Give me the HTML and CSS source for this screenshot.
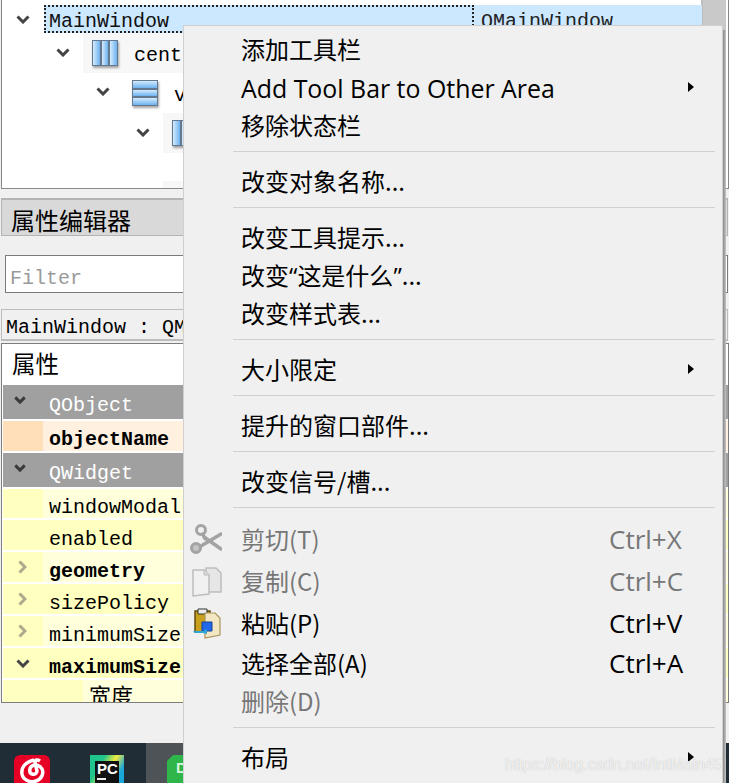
FILE: index.html
```html
<!DOCTYPE html>
<html lang="zh">
<head>
<meta charset="utf-8">
<title>Qt Designer</title>
<link rel="stylesheet" href="styles.css">
</head>
<body>
<div class="page">
  <section class="tree">
    <div class="tree-body">
      <div class="t-row t-first">
        <svg class="chev c-tree" viewBox="0 0 14 9"><path d="M1.500 1.500 7 7l5.500-5.500"/></svg>
        <div class="t-sel"><span class="t-name">MainWindow</span><span class="t-class">QMainWindow</span></div>
      </div>
      <div class="t-row t-alt t-l1">
        <svg class="chev c-tree" viewBox="0 0 14 9"><path d="M1.500 1.500 7 7l5.500-5.500"/></svg>
        <div class="t-cell"><span class="lay lay-h"><i></i><i></i><i></i></span><span class="t-label">centralwidget</span></div>
      </div>
      <div class="t-row t-l2">
        <svg class="chev c-tree" viewBox="0 0 14 9"><path d="M1.500 1.500 7 7l5.500-5.500"/></svg>
        <div class="t-cell"><span class="lay lay-v"><i></i><i></i><i></i></span><span class="t-label">verticalLayout</span></div>
      </div>
      <div class="t-row t-alt t-l3">
        <svg class="chev c-tree" viewBox="0 0 14 9"><path d="M1.500 1.500 7 7l5.500-5.500"/></svg>
        <div class="t-cell"><span class="lay lay-h"><i></i><i></i><i></i></span><span class="t-label">horizontalLayout</span></div>
      </div>
      <div class="t-row t-gap"></div>
      <div class="t-row t-alt t-stub"></div>
    </div>
    <div class="t-scroll"></div>
  </section>

  <header class="dock-title">属性编辑器</header>
  <div class="filter-wrap"><div class="filter">Filter</div></div>
  <div class="obj-label">MainWindow : QMainWindow</div>

  <section class="props">
    <div class="p-head">属性</div>
    <div class="p-group"><svg class="chev c-group" viewBox="0 0 14 9"><path d="M1.500 1.500 7 7l5.500-5.500"/></svg><span>QObject</span></div>
    <div class="p-row peach bold"><span class="gut"></span><span class="pn">objectName</span></div>
    <div class="p-group"><svg class="chev c-group" viewBox="0 0 14 9"><path d="M1.500 1.500 7 7l5.500-5.500"/></svg><span>QWidget</span></div>
    <div class="p-row light h31"><span class="gut"></span><span class="pn">windowModal</span></div>
    <div class="p-row plain"><span class="gut"></span><span class="pn">enabled</span></div>
    <div class="p-row light bold"><span class="gut"><svg class="more" viewBox="0 0 9 14"><path d="M1.500 1.500 7 7l-5.500 5.500"/></svg></span><span class="pn">geometry</span></div>
    <div class="p-row plain"><span class="gut"><svg class="more" viewBox="0 0 9 14"><path d="M1.500 1.500 7 7l-5.500 5.500"/></svg></span><span class="pn">sizePolicy</span></div>
    <div class="p-row light"><span class="gut"><svg class="more" viewBox="0 0 9 14"><path d="M1.500 1.500 7 7l-5.500 5.500"/></svg></span><span class="pn">minimumSize</span></div>
    <div class="p-row plain bold"><span class="gut"><svg class="chev c-prop" viewBox="0 0 14 9"><path d="M1.500 1.500 7 7l5.500-5.500"/></svg></span><span class="pn">maximumSize</span></div>
    <div class="p-row light sub"><span class="gut"></span><span class="pn cjk">宽度</span></div>
  </section>

  <footer class="taskbar">
    <div class="tb-dark">
      <span class="tb-music">
        <svg viewBox="0 0 36 28"><path d="M20 5C12 7 7 12 8 19c1 6 8 9 14 7 6-2 8-8 6-12-2-4-7-5-10-3-3 2-3 7 0 8 3 1 5-1 5-3l-2-9c0-2 2-3 5-1"/></svg>
      </span>
      <span class="tb-pc"><span class="pc-core"><b>PC</b><i></i></span></span>
    </div>
    <div class="tb-hover"><span class="tb-d">D</span></div>
    <div class="tb-fill"></div>
  </footer>

  <nav class="menu">
    <div class="mi"><span class="slot"></span><span class="ml">添加工具栏</span></div>
    <div class="mi"><span class="slot"></span><span class="ml en">Add Tool Bar to Other Area</span><span class="sub-arrow"></span></div>
    <div class="mi"><span class="slot"></span><span class="ml">移除状态栏</span></div>
    <div class="sep"></div>
    <div class="mi"><span class="slot"></span><span class="ml">改变对象名称...</span></div>
    <div class="sep"></div>
    <div class="mi"><span class="slot"></span><span class="ml">改变工具提示...</span></div>
    <div class="mi"><span class="slot"></span><span class="ml">改变<span class="q">“</span>这是什么<span class="q">”</span>...</span></div>
    <div class="mi"><span class="slot"></span><span class="ml">改变样式表...</span></div>
    <div class="sep"></div>
    <div class="mi"><span class="slot"></span><span class="ml">大小限定</span><span class="sub-arrow"></span></div>
    <div class="sep"></div>
    <div class="mi"><span class="slot"></span><span class="ml">提升的窗口部件...</span></div>
    <div class="sep"></div>
    <div class="mi"><span class="slot"></span><span class="ml">改变信号/槽...</span></div>
    <div class="sep"></div>
    <div class="mi tall off"><span class="slot">
      <svg class="ic" viewBox="0 0 32 32">
        <g fill="none" stroke="#a3a3a3" stroke-linecap="round">
          <path d="M14 13 31 25" stroke-width="3.500"/>
          <path d="M11 22 31 10" stroke-width="3.500"/>
          <circle cx="11" cy="6" r="4.500" stroke-width="3"/>
          <circle cx="6" cy="24" r="4.500" stroke-width="3" fill="#c4c4c4"/>
          <path d="M13 10l2 5" stroke-width="3"/>
        </g>
      </svg></span><span class="ml">剪切(T)</span><span class="sc">Ctrl+X</span></div>
    <div class="mi tall off"><span class="slot">
      <svg class="ic" viewBox="0 0 32 32">
        <path d="M16 2h10l5 5v19H16z" fill="#e6e6e6" stroke="#bdbdbd" stroke-width="1.500"/>
        <path d="M3 4h11l5 5v19l-16 2z" fill="#f1f1f1" stroke="#bdbdbd" stroke-width="1.500"/>
        <path d="M14 4v5h5" fill="#d8d8d8" stroke="#bdbdbd"/>
      </svg></span><span class="ml">复制(C)</span><span class="sc">Ctrl+C</span></div>
    <div class="mi tall"><span class="slot">
      <svg class="ic" viewBox="0 0 32 32">
        <path d="M5 3h15v21H5z" fill="#c9a01c" stroke="#5f4a0e" stroke-width="1.500"/>
        <path d="M8 1h9v5H8z" fill="#ececec" stroke="#333"/>
        <path d="M15 5h10l5 5v17l-15 3z" fill="#f3e6c2" stroke="#a8945c" stroke-width="1.200"/>
        <path d="M12 14h10v9H12z" fill="#2368e8" stroke="#12409a"/>
        <path d="M3 23h10l4-2v5l-4-1H5z" fill="#2fa6d8"/>
      </svg></span><span class="ml">粘贴(P)</span><span class="sc">Ctrl+V</span></div>
    <div class="mi"><span class="slot"></span><span class="ml">选择全部(A)</span><span class="sc">Ctrl+A</span></div>
    <div class="mi off"><span class="slot"></span><span class="ml">删除(D)</span></div>
    <div class="sep"></div>
    <div class="mi"><span class="slot"></span><span class="ml">布局</span><span class="sub-arrow"></span></div>
  </nav>
  <div class="menu-shadow"></div>
  <div class="wm">https://blog.csdn.net/IntMain45</div>
</div>
</body>
</html>
```

FILE: styles.css
```css
* { box-sizing: border-box; }
html, body { margin: 0; padding: 0; }
body { background: #f0f0f0; }
.page {
  position: relative; width: 729px; height: 783px; overflow: hidden;
  background: #f0f0f0; display: flex; flex-direction: column; color: #000;
  font-family: "Noto Sans CJK SC", "Noto Sans", sans-serif;
}

/* object tree */
.tree {
  height: 189px; margin-left: 1px; width: 728px; flex: none; display: flex;
  background: #fff; border: 1px solid #888; border-top: 0; overflow: hidden;
}
.tree-body { width: 701px; flex: none; padding-top: 5px; border-right: 2px solid #bdbdbd; }
.t-row { position: relative; height: 40px; display: flex; align-items: center; }
.t-first { height: 28px; }
.t-gap { height: 28px; }
.t-stub { height: 8px; margin-left: 161px; background: #f7f7f7; }
.t-sel { position: absolute; left: 42px; right: -1px; top: 0; height: 28px; background: #cce8ff; display: flex; }
.t-name {
  width: 430px; height: 28px; padding: 0 0 0 3px; border: 2px dotted #222;
  font: 20px/30px "Liberation Mono", monospace; color: #111; overflow: hidden;
}
.t-class { padding-left: 7px; font: 20px/34px "Liberation Mono", monospace; color: #222; }
.t-cell { position: absolute; top: 0; bottom: 0; right: 0; display: flex; align-items: center; gap: 16px; padding-left: 9px; }
.t-l1 .t-cell { left: 81px; background: #f7f7f7; }
.t-l2 .t-cell { left: 121px; }
.t-l3 .t-cell { left: 161px; background: #f7f7f7; }
.t-label { font: 20px/28px "Liberation Mono", monospace; padding-top: 6px; }
.chev { display: block; fill: none; stroke: #444; stroke-width: 3; }
.c-tree { position: absolute; width: 14px; height: 9px; top: 14px; }
.t-first .c-tree { left: 14px; top: 10px; }
.t-l1 .c-tree { left: 54px; top: 15px; }
.t-l2 .c-tree { left: 94px; }
.t-l3 .c-tree { left: 134px; top: 15px; }

.lay { display: flex; width: 26px; height: 26px; gap: 0; filter: drop-shadow(1px 2px 1px rgba(90,90,90,.55)); }
.lay-h { flex-direction: row; }
.lay-v { flex-direction: column; }
.lay i { flex: 1; display: block; border: 1px solid #63788f; }
.lay-h i { background: linear-gradient(90deg, #d4ebfc, #6eb2f0); }
.lay-v i { background: linear-gradient(180deg, #d4ebfc, #6eb2f0); }
.t-scroll { flex: 1; background: #c9c9c9; margin-right: 2px; }

/* dock title */
.dock-title {
  height: 38px; margin: 9px 1px 0 1px; flex: none; background: #d9d9d9;
  border: 1px solid #b4b4b4; border-top-width: 2px; padding-left: 9px;
  font-size: 24px; line-height: 39px;
}
.filter-wrap { height: 73px; padding: 19px 1px 0 5px; flex: none; }
.filter {
  height: 38px; background: #fff; border: 1px solid #7a7a7a; padding-left: 4px;
  font: 20px/46px "Liberation Mono", monospace; color: #9a9a9a; overflow: hidden;
}
.obj-label {
  height: 32px; margin: 0 1px; flex: none; background: #f0f0f0;
  border: 1px solid #bcbcbc; border-bottom-width: 2px; padding-left: 4px;
  font: 20px/36px "Liberation Mono", monospace; overflow: hidden;
}

/* property table */
.props {
  height: 360px; margin: 2px 0 0 1px; flex: none; border: 1px solid #7d7d7d;
  background: #fff; overflow: hidden; padding-left: 1px;
}
.p-head { height: 41px; padding-left: 9px; font-size: 23.500px; line-height: 38px; }
.p-group {
  height: 34px; margin-bottom: 2px; display: flex; align-items: center; position: relative;
  background: #a0a0a0; color: #fff; padding: 8px 0 0 46px;
  font: 20px/26px "Liberation Mono", monospace;
}
.c-group { position: absolute; left: 11px; top: 11px; width: 12px; height: 8px; stroke: #3a3a3a; stroke-width: 3.500; }
.p-row { display: flex; height: 30px; margin-bottom: 2px; font: 20px/40px "Liberation Mono", monospace; }
.p-row.peach, .p-row.h31 { line-height: 38px; }
.h31 { height: 29px; }
.gut { width: 40px; flex: none; display: flex; align-items: center; padding-left: 13px; position: relative; }
.pn { flex: 1; padding-left: 6px; white-space: nowrap; }
.bold .pn { font-weight: 700; }
.peach { background: #ffdfba; }
.peach .pn { background: #fff0e0; }
.light { background: #ffffbf; }
.light .pn { background: #ffffdc; }
.plain { background: #ffffbf; }
.more { width: 9px; height: 14px; margin-left: 2px; fill: none; stroke: #aaa98c; stroke-width: 3; }
.c-prop { width: 14px; height: 9px; stroke: #444; }
.sub .gut { width: 80px; }
.p-row .cjk { font: 22px/28px "Noto Sans CJK SC", sans-serif; padding-left: 6px; }

/* taskbar */
.taskbar { height: 40px; margin-top: 40px; flex: none; display: flex; background: #1f2d36; }
.tb-dark { width: 146px; position: relative; background: #202d36; }
.tb-hover { width: 38px; background: #4e5358; padding: 12px 0 0 21px; overflow: hidden; flex: none; }
.tb-fill { flex: 1; }
.tb-music { position: absolute; left: 14px; top: 12px; width: 36px; height: 28px; background: #e60026; border-radius: 6px 6px 0 0; }
.tb-music svg { display: block; fill: none; stroke: #fff; stroke-width: 3.500; width: 36px; height: 28px; }
.tb-pc { position: absolute; left: 90px; top: 12px; width: 34px; height: 28px; background: linear-gradient(120deg, #1fc58c 30%, #f2ea3e 55%, #1aa6d8 80%); padding: 6px 0 0 5px; }
.pc-core { display: block; width: 24px; height: 22px; background: #111; color: #fff; position: relative; padding-left: 2px; }
.pc-core b { display: block; font: 700 15px/15px "Liberation Sans", sans-serif; }
.pc-core i { display: block; width: 9px; height: 2px; background: #eee; margin-top: 2px; }
.tb-d {
  display: block; width: 20px; height: 28px; background: #2fb64a; color: #d8f5dc;
  font: 700 15px/26px "Liberation Sans", sans-serif; padding-left: 9px;
  clip-path: polygon(6px 0, 100% 0, 100% 100%, 0 100%, 0 6px);
}

/* context menu */
.menu {
  position: absolute; left: 183px; top: 25px; width: 540px; height: 758px;
  background: #f0f0f0; border: 1px solid #cfcfcf; border-bottom: 0; padding-top: 5px;
}
.mi { height: 38px; display: flex; align-items: center; font-size: 24px; color: #000; position: relative; }
.tall { height: 42px; }
.off { color: #777; }
.slot { width: 51px; margin-left: 6px; flex: none; display: flex; align-items: center; height: 32px; }
.ic { width: 32px; height: 32px; display: block; }
.ml { white-space: nowrap; line-height: 36px; margin-bottom: 2px; }
.en { font-family: "Open Sans", "Noto Sans", sans-serif; font-size: 24.900px; margin-bottom: 0; }
.q { font-family: "Open Sans", "Noto Sans", sans-serif; }
.sc { position: absolute; left: 425px; font-family: "Open Sans", "Noto Sans", sans-serif; font-size: 26px; line-height: 36px; margin-bottom: 2px; }
.sub-arrow {
  position: absolute; left: 504px; top: 13px; width: 0; height: 0;
  border-left: 6px solid #000; border-top: 5px solid transparent; border-bottom: 5px solid transparent;
}
.sep { height: 18px; padding: 6px 7px 11px 49px; }
.sep::before { content: ""; display: block; height: 1px; background: #d0d0d0; }
.menu-shadow { position: absolute; left: 723px; top: 30px; width: 3px; height: 753px; background: linear-gradient(90deg, #8a8a8a, #c4c4c4); }
.wm {
  position: absolute; left: 505px; top: 753px; font: 16px/24px "Liberation Sans", sans-serif;
  color: rgba(255,255,255,.8); text-shadow: 0 0 1px rgba(120,120,120,.5); white-space: nowrap;
}
```
